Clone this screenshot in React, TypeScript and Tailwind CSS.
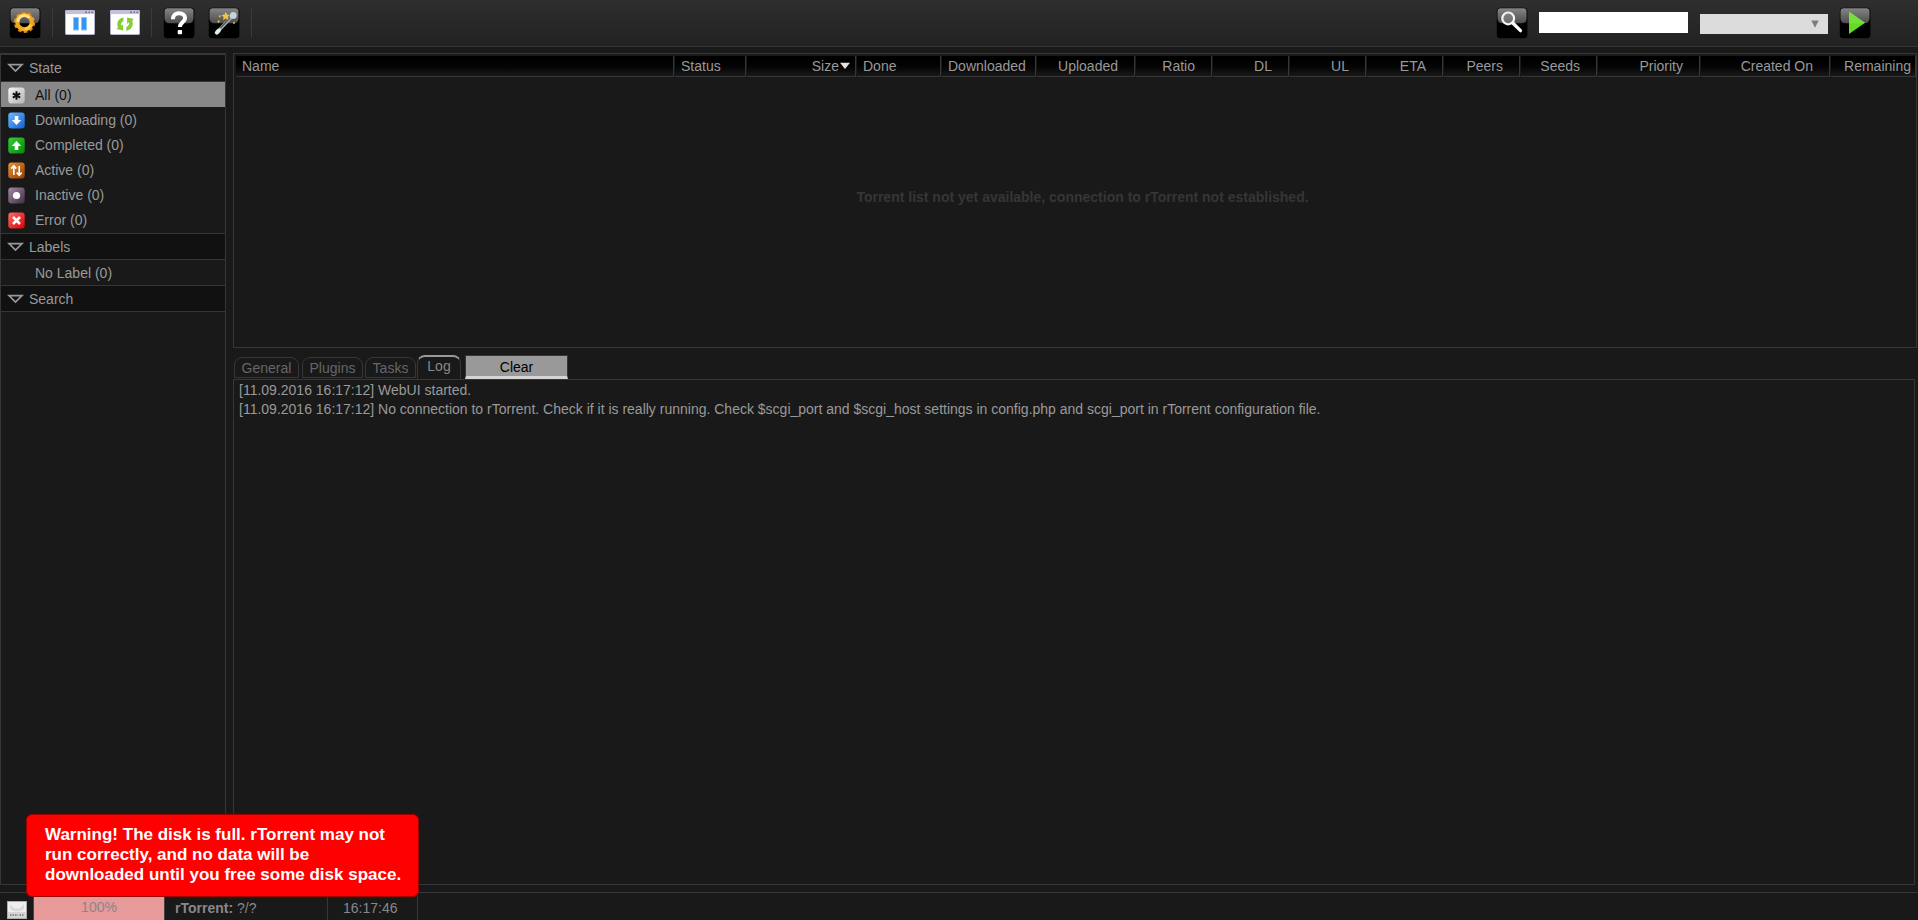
import React from 'react'

interface Column {
  name: string
  cell: string
  sorted?: boolean
}

interface Filter {
  label: string
  from?: string
  to?: string
  glyph?: React.ReactNode
  selected?: boolean
}

const COLUMNS: Column[] = [
  { name: 'Name', cell: 'w-[438px] pl-1.5' },
  { name: 'Status', cell: 'w-[71px] pl-1.5' },
  { name: 'Size', cell: 'w-[109px] justify-end pr-1', sorted: true },
  { name: 'Done', cell: 'w-[84px] pl-1.5' },
  { name: 'Downloaded', cell: 'w-[94px] pl-1.5' },
  { name: 'Uploaded', cell: 'w-[98px] justify-end pr-4' },
  { name: 'Ratio', cell: 'w-[76px] justify-end pr-4' },
  { name: 'DL', cell: 'w-[76px] justify-end pr-4' },
  { name: 'UL', cell: 'w-[76px] justify-end pr-4' },
  { name: 'ETA', cell: 'w-[76px] justify-end pr-4' },
  { name: 'Peers', cell: 'w-[76px] justify-end pr-4' },
  { name: 'Seeds', cell: 'w-[76px] justify-end pr-4' },
  { name: 'Priority', cell: 'w-[102px] justify-end pr-4' },
  { name: 'Created On', cell: 'w-[129px] justify-end pr-4' },
  { name: 'Remaining', cell: 'w-[85px] justify-end pr-1' },
]

const FILTERS: Filter[] = [
  {
    label: 'All (0)',
    from: '#f4f4f4',
    to: '#b4b4b4',
    selected: true,
    glyph: <path d="M8.5 4.2v8.6M4.8 6.3l7.4 4.4M12.2 6.3l-7.4 4.4" stroke="#111" strokeWidth="2" />,
  },
  {
    label: 'Downloading (0)',
    from: '#6db8ff',
    to: '#0f62d8',
    glyph: <path d="M6.7 4h3.6v4h2.9l-4.7 5-4.7-5h2.9z" fill="#fff" />,
  },
  {
    label: 'Completed (0)',
    from: '#3ccb3c',
    to: '#058a05',
    glyph: <path d="M6.7 13h3.6V9h2.9L8.5 4 3.8 9h2.9z" fill="#fff" />,
  },
  {
    label: 'Active (0)',
    from: '#ef923a',
    to: '#8d3e00',
    glyph: (
      <path
        d="M5.8 13V4.5M3.3 6.6l2.5-2.8 2.5 2.8M11.2 4v8.5M8.7 10.6l2.5 2.8 2.5-2.8"
        stroke="#fff"
        strokeWidth="1.6"
        fill="none"
      />
    ),
  },
  {
    label: 'Inactive (0)',
    from: '#a58ba5',
    to: '#3f2d42',
    glyph: <circle cx="8.5" cy="8.5" r="3.6" fill="#fff" />,
  },
  {
    label: 'Error (0)',
    from: '#ff6a6a',
    to: '#d80000',
    glyph: <path d="M5 5l7 7M12 5l-7 7" stroke="#fff" strokeWidth="2.6" />,
  },
]

const LOG = [
  '[11.09.2016 16:17:12] WebUI started.',
  '[11.09.2016 16:17:12] No connection to rTorrent. Check if it is really running. Check $scgi_port and $scgi_host settings in config.php and scgi_port in rTorrent configuration file.',
]

const GlossIcon: React.FC<{ id: string; children: React.ReactNode }> = ({ id, children }) => (
  <svg width="32" height="32" viewBox="0 0 32 32" className="block shrink-0">
    <defs>
      <linearGradient id={id} x1="0" y1="0" x2="0" y2="1">
        <stop offset="0" stopColor="#858585" />
        <stop offset="1" stopColor="#4c4c4c" />
      </linearGradient>
    </defs>
    <rect x="0.8" y="0.8" width="30.6" height="30.4" rx="3.5" fill="#000" />
    <path d="M1.5 4.5q0-3.2 3.2-3.2h22.6q3.2 0 3.2 3.2v6.8q0 5-5 5h-19q-5 0-5-5z" fill={`url(#${id})`} />
    {children}
  </svg>
)

const WindowIcon: React.FC<{ children: React.ReactNode }> = ({ children }) => (
  <svg width="30" height="25" viewBox="0 0 30 25" className="block shrink-0">
    <rect x="0.5" y="0.5" width="29" height="24" rx="0.8" fill="#fff" stroke="#b5b3cf" />
    <rect x="0.5" y="0.5" width="29" height="3.6" fill="#c4c1dc" />
    <path d="M20 2.2h2M23.4 2.2h1.6M26.4 2.2h1.8" stroke="#7775a0" strokeWidth="1.6" />
    {children}
  </svg>
)

const Separator = () => <div className="h-[29px] w-px shrink-0 bg-[#3a3a3a]" />

const Toolbar = () => (
  <header className="flex h-[47px] shrink-0 border-b border-[#363636] bg-linear-to-b from-[#2e2e2e] to-[#222222] pt-[7px]">
    <div className="flex w-[251px] items-start pl-[9px]">
      <GlossIcon id="gloss-settings">
        <circle cx="15.5" cy="15.4" r="9.6" fill="none" stroke="#d98a12" strokeWidth="2.2" strokeDasharray="3.6 2.43" />
        <circle cx="15.5" cy="15.2" r="7.2" fill="none" stroke="#f0a822" strokeWidth="4.2" />
        <path d="M8.8 14.8a6.7 6.7 0 0 1 11.6-4.1" fill="none" stroke="#ffe08c" strokeWidth="3" />
        <path d="M21.8 17.6a6.7 6.7 0 0 1-6.4 4.4" fill="none" stroke="#ffd23c" strokeWidth="2.4" />
      </GlossIcon>
      <div className="ml-[11px] pt-px">
        <Separator />
      </div>
      <div className="ml-3 pt-[3px]">
        <WindowIcon>
          <rect x="8.5" y="7.5" width="5" height="12.5" fill="#3494f4" stroke="#8cc3fa" />
          <rect x="16.5" y="7.5" width="5" height="12.5" fill="#3494f4" stroke="#8cc3fa" />
        </WindowIcon>
      </div>
      <div className="ml-[15px] pt-[3px]">
        <WindowIcon>
          <path d="M13.5 7.4C8.6 8 6 12.8 8 17.4l-1.6 1.5 6.6 1.6v-6.2l-2 1.5c-.3-1.9.5-3.7 2.5-4.7z" fill="#84ce33" />
          <path d="M16.2 20.7c5.3-.8 7.8-5.4 6-10.2l1.7-1.4-6.8-1.5v6.3l2-1.7c.5 2-.5 3.8-2.9 4.9z" fill="#84ce33" />
        </WindowIcon>
      </div>
      <div className="ml-[11px] pt-px">
        <Separator />
      </div>
      <div className="ml-[11px]">
        <GlossIcon id="gloss-help">
          <path
            d="M9.9 12.2c0-4 2.7-6 6.1-6 3.7 0 6.1 2 6.1 4.9 0 4.2-5.3 4.2-5.3 9"
            fill="none"
            stroke="#fff"
            strokeWidth="4"
          />
          <rect x="14.7" y="23" width="4.4" height="4.2" rx="1" fill="#fff" />
        </GlossIcon>
      </div>
      <div className="ml-[13px]">
        <GlossIcon id="gloss-plugins">
          <path d="M9.4 25L24.2 9.2" stroke="#aeb8ba" strokeWidth="3.2" strokeLinecap="round" />
          <path d="M12.5 21L22 10.8" stroke="#555b5e" strokeWidth="1.6" />
          <path d="M8.8 25.6l2-2.1" stroke="#d8f2f6" strokeWidth="4" strokeLinecap="round" />
          <circle cx="25.3" cy="8.4" r="3.4" fill="#c3d3d6" />
          <path d="M17.8 4.8l1.2 2.8 3 .4-2.2 2 .5 2.9-2.5-1.4-2.7 1.4.5-2.9-2.1-2 3-.4z" fill="#f2c34a" />
          <path d="M12 7.8l1 1.4-1.2 1.6-1.2-1.6zM10.6 13l1.4 1.5-1.4 1.5L9.2 14.500zM26 14.500l1.2 1.400-1.200 1.400-1.200-1.400z" fill="#e2b23e" />
        </GlossIcon>
      </div>
      <div className="ml-[11px] pt-px">
        <Separator />
      </div>
    </div>
    <div className="ml-auto flex items-start pr-[47px]">
      <GlossIcon id="gloss-search">
        <circle cx="12.200" cy="11.400" r="5.900" fill="#8e9293" fillOpacity="0.5" stroke="#f4f4f4" strokeWidth="2.200" />
        <path d="M16.800 16l7.700 7.700" stroke="#fff" strokeWidth="3.200" strokeLinecap="round" />
      </GlossIcon>
      <input type="text" className="mt-[5px] ml-[11px] h-[21px] w-[149px] bg-white px-1 text-black outline-none" />
      <div className="mt-[7px] ml-3 flex h-5 w-32 items-center justify-end bg-[#dcdcdc] pr-[9px]">
        <svg width="8" height="8" viewBox="0 0 8 8">
          <path d="M0.300 0.500h7.400L4 7.800z" fill="#7d7d7d" />
        </svg>
      </div>
      <div className="ml-[11px]">
        <GlossIcon id="gloss-go">
          <path d="M10 4.500v22.500L26 15.800z" fill="#62dd22" />
          <path d="M10 4.500v12h15L26 15.800z" fill="#8be05c" fillOpacity="0.500" />
        </GlossIcon>
      </div>
    </div>
  </header>
)

const PanelHeader: React.FC<{ title: string; className: string }> = ({ title, className }) => (
  <div className={`flex items-center border-b border-[#363636] bg-[#111111] pl-1.5 ${className}`}>
    <svg width="17" height="10" viewBox="0 0 17 10">
      <path d="M2 1.600h13L8.500 8z" fill="#111" stroke="#999" strokeWidth="1.700" />
    </svg>
    <span className="pl-[5px]">{title}</span>
  </div>
)

const FilterRow: React.FC<{ item: Filter; id: string }> = ({ item, id }) => (
  <div
    className={
      item.selected
        ? 'flex h-[25px] items-center bg-[#888888] pl-[7px] text-[#111111]'
        : 'flex h-[25px] items-center pl-[7px]'
    }
  >
    <svg width="17" height="17" viewBox="0 0 17 17" className="mt-px">
      {item.glyph && (
        <>
          <defs>
            <linearGradient id={id} x1="0" y1="0" x2="1" y2="1">
              <stop offset="0" stopColor={item.from} />
              <stop offset="1" stopColor={item.to} />
            </linearGradient>
          </defs>
          <rect x="0.300" y="0.500" width="16.400" height="16" rx="3" fill={`url(#${id})`} />
          {item.glyph}
        </>
      )}
    </svg>
    <span className="pl-2.5">{item.label}</span>
  </div>
)

const Sidebar = () => (
  <aside className="h-[832px] w-[226px] border border-[#363636]">
    <PanelHeader title="State" className="h-7 border-t" />
    <div className="h-[151px]">
      {FILTERS.map((f, i) => (
        <FilterRow key={f.label} item={f} id={`filter-${i}`} />
      ))}
    </div>
    <PanelHeader title="Labels" className="h-[27px] border-t" />
    <FilterRow item={{ label: 'No Label (0)' }} id="no-label" />
    <PanelHeader title="Search" className="h-[27px] border-t" />
  </aside>
)

const TorrentList = () => (
  <section className="h-[295px] w-[1684px] border border-[#363636] pt-0.5 pl-0.5">
    <div className="flex h-[21px] gap-px overflow-hidden">
      {COLUMNS.map((c) => (
        <div
          key={c.name}
          className={`flex shrink-0 items-center border-r border-b border-[#363636] bg-linear-to-b from-black to-[#191919] whitespace-nowrap ${c.cell}`}
        >
          {c.name}
          {c.sorted && (
            <svg width="12" height="8" viewBox="0 0 12 8">
              <path d="M1 0.800h10L6 7z" fill="#e4e4e4" />
            </svg>
          )}
        </div>
      ))}
    </div>
    <p className="pt-[112px] pl-[13px] text-center font-bold text-[#363636]">
      Torrent list not yet available, connection to rTorrent not established.
    </p>
  </section>
)

const Tabs = () => (
  <div className="flex h-6 items-start pl-px text-[#666666]">
    <div className="mt-0.5 flex h-[21px] w-[65px] items-center justify-center rounded-t-lg border border-[#363636]">
      General
    </div>
    <div className="mt-0.5 ml-[3px] flex h-[21px] w-[61px] items-center justify-center rounded-t-lg border border-[#363636]">
      Plugins
    </div>
    <div className="mt-0.5 ml-0.5 flex h-[21px] w-[51px] items-center justify-center rounded-t-lg border border-[#363636]">
      Tasks
    </div>
    <div className="ml-px flex h-6 w-11 items-start justify-center rounded-t-lg border border-t-2 border-b-0 border-[#363636] border-t-[#999999] pt-px text-[#888888]">
      Log
    </div>
    <button className="ml-1 flex h-6 w-[103px] items-center justify-center border border-b-[3px] border-[#363636] border-b-[#d4d4d4] bg-[#999999] pt-0.5 text-black">
      Clear
    </button>
  </div>
)

const StatusBar = () => (
  <footer className="flex h-7 border-t border-[#363636] text-[#888888]">
    <div className="w-[33px] pt-2 pl-[7px]">
      <svg width="20" height="18" viewBox="0 0 20 18">
        <rect x="0.500" y="0.500" width="19" height="17" fill="#d6d6d6" stroke="#aaa" />
        <rect x="1" y="1" width="18" height="10" fill="#eee" />
        <path d="M3 3q7 9 14 0v5q-7 5-14 0z" fill="#dadada" />
        <path d="M3 14h8M12.500 14h4" stroke="#8c8c8c" strokeWidth="2" strokeDasharray="1.500 1" />
      </svg>
    </div>
    <div className="w-[132px] border-x border-[#444444] bg-[#e69a9a] pt-1 text-center leading-5">100%</div>
    <div className="w-[163px] border-r border-[#363636] pt-[5px] pl-2.5 leading-5">
      <b>rTorrent:</b> ?/?
    </div>
    <div className="w-[90px] border-r border-[#363636] pt-[5px] pl-[15px] leading-5">16:17:46</div>
  </footer>
)

const App = () => (
  <div className="relative flex h-[920px] w-full flex-col overflow-hidden bg-[#191919] font-['Liberation_Sans',Arial,sans-serif] text-[14px] leading-4 text-[#999999]">
    <Toolbar />
    <main className="flex h-[845px] gap-[7px] pt-1.5">
      <Sidebar />
      <div className="flex flex-col">
        <TorrentList />
        <div className="mt-[7px]">
          <Tabs />
        </div>
        <div className="h-[506px] w-[1682px] border border-[#363636] pt-px pl-[5px] leading-[19px]">
          {LOG.map((line) => (
            <div key={line}>{line}</div>
          ))}
        </div>
      </div>
    </main>
    <StatusBar />
    <div className="absolute top-[814px] left-[26px] h-[83px] w-[393px] rounded-md border border-[#a00000] bg-[#ff0000] pt-2.5 pl-[18px] text-[17px] leading-5 font-bold text-white">
      <div>Warning! The disk is full. rTorrent may not</div>
      <div>run correctly, and no data will be</div>
      <div>downloaded until you free some disk space.</div>
    </div>
  </div>
)

export default App
